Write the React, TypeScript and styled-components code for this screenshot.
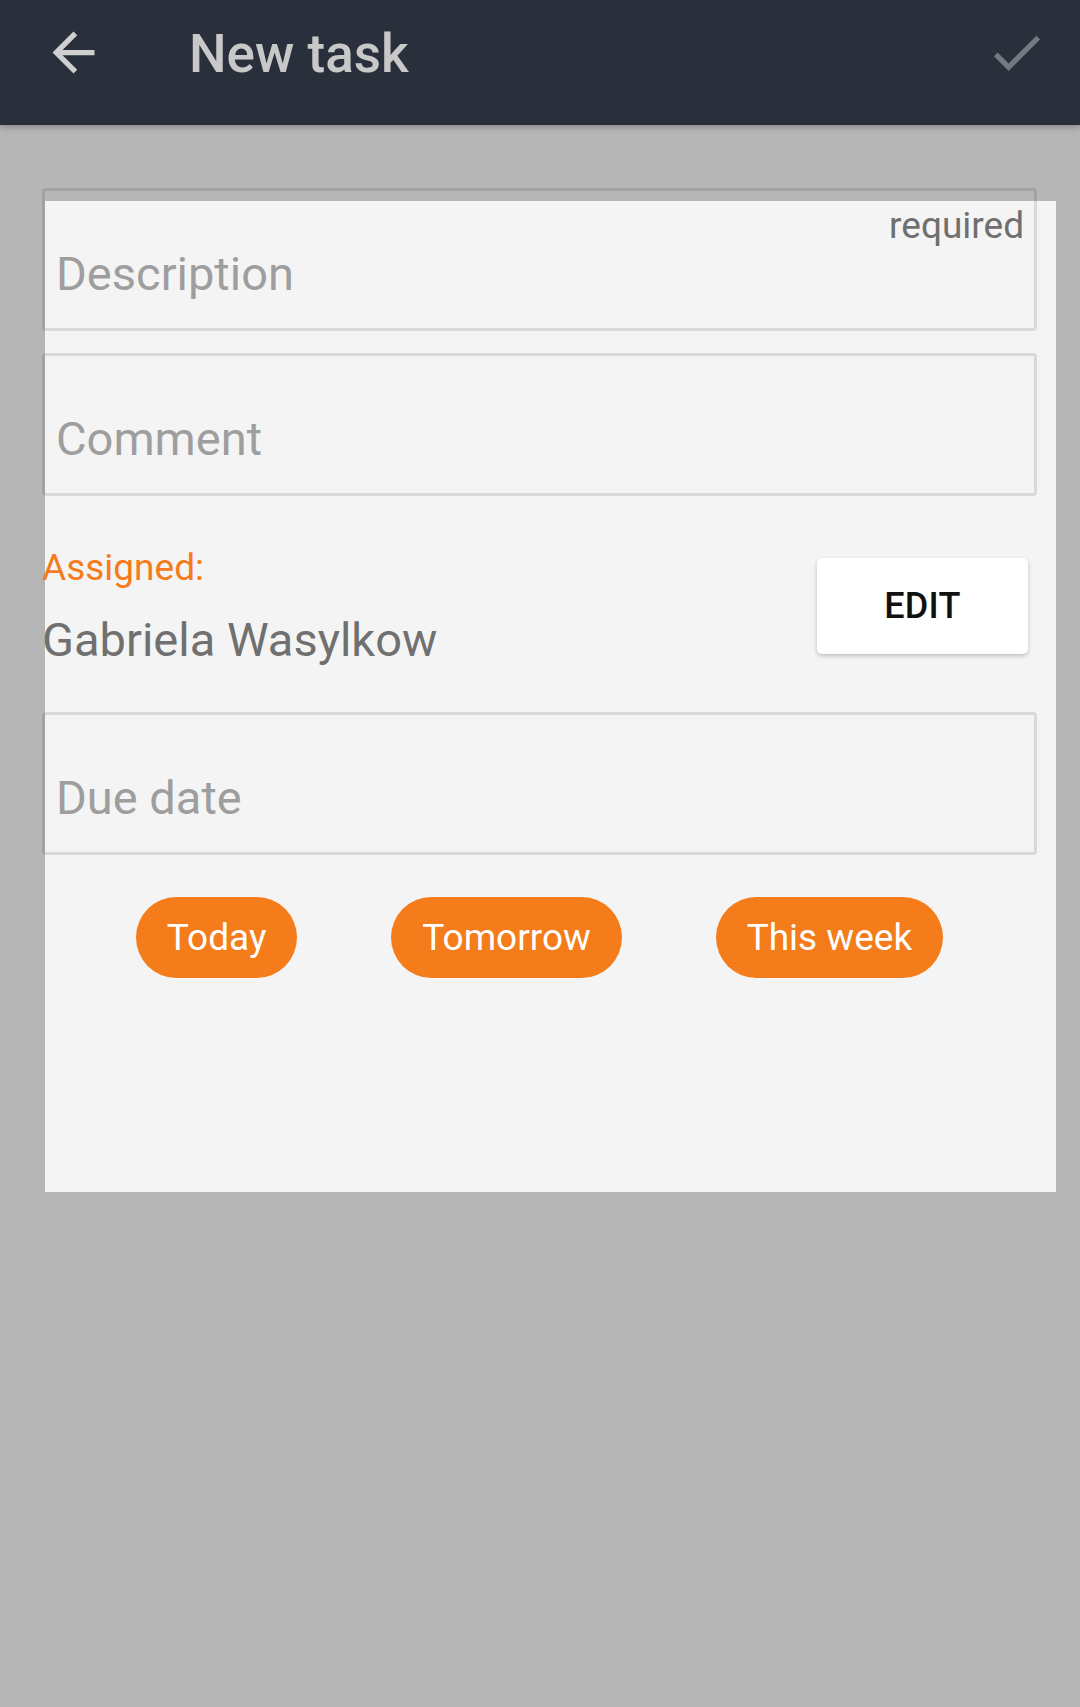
import React from "react";
import styled, { createGlobalStyle } from "styled-components";

const Global = createGlobalStyle`
  html, body {
    margin: 0;
    padding: 0;
    background: #b6b6b6;
    font-family: Roboto, "Noto Sans", "Liberation Sans", sans-serif;
  }
  #root {
    min-height: 1707px;
    background: #b6b6b6;
  }
`;

const Header = styled.header`
  height: 125px;
  background: #2a303b;
  box-shadow: 0 2px 6px rgba(0, 0, 0, 0.28);
  position: relative;
  z-index: 1;
`;

const Toolbar = styled.div`
  height: 104px;
  display: flex;
  align-items: center;
  padding: 0 32px 0 42px;
`;

const IconButton = styled.button<{ $color: string }>`
  width: 63px;
  height: 63px;
  padding: 0;
  border: none;
  background: transparent;
  display: flex;
  align-items: center;
  justify-content: center;
  color: ${(p) => p.$color};
  svg {
    width: 63px;
    height: 63px;
    display: block;
  }
`;

const Title = styled.h1`
  margin: 0 0 0 84px;
  padding-top: 3px;
  flex: 1;
  font-size: 53px;
  font-weight: 500;
  line-height: 104px;
  color: #c8c8c8;
`;

const Card = styled.main`
  display: flow-root;
  margin: 76px 0 0 45px;
  width: 1011px;
  height: 991px;
  background: #f4f4f4;
`;

const Content = styled.div`
  margin: -13px 0 0 -3px;
  width: 995px;
  display: flex;
  flex-direction: column;
`;

const Field = styled.div<{ $gap?: number }>`
  position: relative;
  box-sizing: border-box;
  height: 143px;
  margin-top: ${(p) => p.$gap ?? 0}px;
  border: 3px solid rgba(0, 0, 0, 0.11);
  border-radius: 4px;
  padding: 56px 0 0 11px;
  font-size: 47px;
  line-height: 54px;
  color: #9e9e9e;
`;

const Required = styled.span`
  position: absolute;
  top: 13px;
  right: 10px;
  font-size: 37px;
  line-height: 44px;
  color: #6f6f6f;
`;

const AssignedRow = styled.div`
  margin-top: 51px;
  display: flex;
  align-items: flex-start;
  justify-content: space-between;
`;

const AssignedInfo = styled.div`
  display: flex;
  flex-direction: column;
`;

const AssignedLabel = styled.span`
  font-size: 37px;
  line-height: 41px;
  color: #f47c1c;
`;

const AssignedName = styled.span`
  margin-top: 25px;
  font-size: 47px;
  line-height: 54px;
  color: #707070;
`;

const EditButton = styled.button`
  margin: 11px 9px 0 0;
  width: 211px;
  height: 96px;
  border: none;
  border-radius: 5px;
  background: #ffffff;
  box-shadow: 0 2px 4px rgba(0, 0, 0, 0.22);
  font-family: Roboto, "Noto Sans", sans-serif;
  font-size: 36px;
  font-weight: 500;
  color: #111111;
  letter-spacing: 0.3px;
`;

const QuickRow = styled.div`
  margin-top: 42px;
  display: flex;
  justify-content: space-evenly;
`;

const Pill = styled.button`
  height: 81px;
  padding: 0 31px;
  border: none;
  border-radius: 41px;
  background: #f47c1a;
  color: #ffffff;
  font-family: Roboto, "Noto Sans", sans-serif;
  font-size: 37px;
  line-height: 81px;
`;

export default function App() {
  return (
    <>
      <Global />
      <Header>
        <Toolbar>
          <IconButton $color="#cfcfcf" aria-label="back">
            <svg viewBox="0 0 24 24" fill="currentColor">
              <path d="M20 11H7.83l5.59-5.59L12 4l-8 8 8 8 1.41-1.41L7.83 13H20v-2z" />
            </svg>
          </IconButton>
          <Title>New task</Title>
          <IconButton $color="#737a83" aria-label="save">
            <svg viewBox="0 0 24 24" fill="currentColor">
              <path d="M9 16.17L4.83 12l-1.42 1.41L9 19 21 7l-1.41-1.41z" />
            </svg>
          </IconButton>
        </Toolbar>
      </Header>
      <Card>
        <Content>
          <Field>
            Description
            <Required>required</Required>
          </Field>
          <Field $gap={22}>Comment</Field>
          <AssignedRow>
            <AssignedInfo>
              <AssignedLabel>Assigned:</AssignedLabel>
              <AssignedName>Gabriela Wasylkow</AssignedName>
            </AssignedInfo>
            <EditButton>EDIT</EditButton>
          </AssignedRow>
          <Field $gap={45}>Due date</Field>
          <QuickRow>
            <Pill>Today</Pill>
            <Pill>Tomorrow</Pill>
            <Pill>This week</Pill>
          </QuickRow>
        </Content>
      </Card>
    </>
  );
}
